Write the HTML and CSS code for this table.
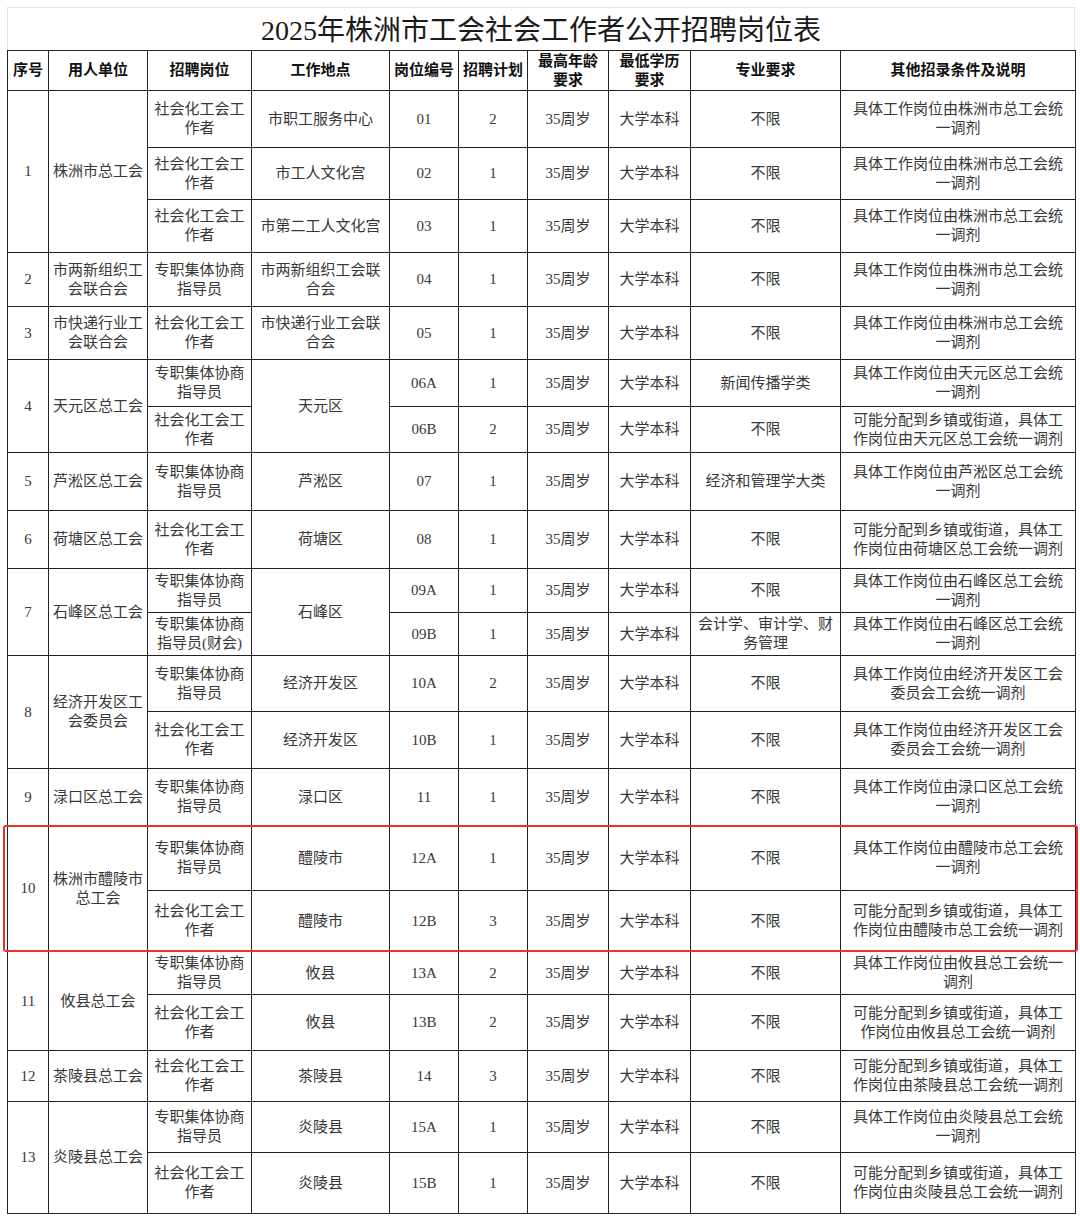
FILE: index.html
```html
<!DOCTYPE html>
<html lang="zh-CN">
<head>
<meta charset="utf-8">
<title>2025年株洲市工会社会工作者公开招聘岗位表</title>
<link rel="stylesheet" href="styles.css">
</head>
<body>
<div class="page">
  <div class="title">2025年株洲市工会社会工作者公开招聘岗位表</div>
  <table class="jobs">
    <colgroup>
      <col class="c-no"><col class="c-unit"><col class="c-post"><col class="c-place"><col class="c-code"><col class="c-plan"><col class="c-age"><col class="c-edu"><col class="c-major"><col class="c-note">
    </colgroup>
    <thead>
      <tr class="h40">
        <th>序号</th><th>用人单位</th><th>招聘岗位</th><th>工作地点</th><th class="tight">岗位编号</th><th class="tight">招聘计划</th><th>最高年龄要求</th><th>最低学历要求</th><th>专业要求</th><th>其他招录条件及说明</th>
      </tr>
    </thead>
    <tbody>
      <tr class="h57">
        <td rowspan="3">1</td><td rowspan="3" class="unit">株洲市总工会</td><td>社会化工会工作者</td><td>市职工服务中心</td><td>01</td><td>2</td><td>35周岁</td><td>大学本科</td><td>不限</td><td class="note">具体工作岗位由株洲市总工会统一调剂</td>
      </tr>
      <tr class="h52">
        <td>社会化工会工作者</td><td>市工人文化宫</td><td>02</td><td>1</td><td>35周岁</td><td>大学本科</td><td>不限</td><td class="note">具体工作岗位由株洲市总工会统一调剂</td>
      </tr>
      <tr class="h53">
        <td>社会化工会工作者</td><td>市第二工人文化宫</td><td>03</td><td>1</td><td>35周岁</td><td>大学本科</td><td>不限</td><td class="note">具体工作岗位由株洲市总工会统一调剂</td>
      </tr>
      <tr class="h54">
        <td>2</td><td class="unit">市两新组织工会联合会</td><td>专职集体协商指导员</td><td>市两新组织工会联合会</td><td>04</td><td>1</td><td>35周岁</td><td>大学本科</td><td>不限</td><td class="note">具体工作岗位由株洲市总工会统一调剂</td>
      </tr>
      <tr class="h53">
        <td>3</td><td class="unit">市快递行业工会联合会</td><td>社会化工会工作者</td><td>市快递行业工会联合会</td><td>05</td><td>1</td><td>35周岁</td><td>大学本科</td><td>不限</td><td class="note">具体工作岗位由株洲市总工会统一调剂</td>
      </tr>
      <tr class="h47">
        <td rowspan="2">4</td><td rowspan="2" class="unit">天元区总工会</td><td>专职集体协商指导员</td><td rowspan="2">天元区</td><td>06A</td><td>1</td><td>35周岁</td><td>大学本科</td><td>新闻传播学类</td><td class="note">具体工作岗位由天元区总工会统一调剂</td>
      </tr>
      <tr class="h46">
        <td>社会化工会工作者</td><td>06B</td><td>2</td><td>35周岁</td><td>大学本科</td><td>不限</td><td class="note">可能分配到乡镇或街道，具体工作岗位由天元区总工会统一调剂</td>
      </tr>
      <tr class="h58">
        <td>5</td><td class="unit">芦淞区总工会</td><td>专职集体协商指导员</td><td>芦淞区</td><td>07</td><td>1</td><td>35周岁</td><td>大学本科</td><td>经济和管理学大类</td><td class="note">具体工作岗位由芦淞区总工会统一调剂</td>
      </tr>
      <tr class="h58">
        <td>6</td><td class="unit">荷塘区总工会</td><td>社会化工会工作者</td><td>荷塘区</td><td>08</td><td>1</td><td>35周岁</td><td>大学本科</td><td>不限</td><td class="note">可能分配到乡镇或街道，具体工作岗位由荷塘区总工会统一调剂</td>
      </tr>
      <tr class="h44">
        <td rowspan="2">7</td><td rowspan="2" class="unit">石峰区总工会</td><td>专职集体协商指导员</td><td rowspan="2">石峰区</td><td>09A</td><td>1</td><td>35周岁</td><td>大学本科</td><td>不限</td><td class="note">具体工作岗位由石峰区总工会统一调剂</td>
      </tr>
      <tr class="h43">
        <td>专职集体协商指导员(财会)</td><td>09B</td><td>1</td><td>35周岁</td><td>大学本科</td><td>会计学、审计学、财务管理</td><td class="note">具体工作岗位由石峰区总工会统一调剂</td>
      </tr>
      <tr class="h56">
        <td rowspan="2">8</td><td rowspan="2" class="unit">经济开发区工会委员会</td><td>专职集体协商指导员</td><td>经济开发区</td><td>10A</td><td>2</td><td>35周岁</td><td>大学本科</td><td>不限</td><td class="note">具体工作岗位由经济开发区工会委员会工会统一调剂</td>
      </tr>
      <tr class="h57">
        <td>社会化工会工作者</td><td>经济开发区</td><td>10B</td><td>1</td><td>35周岁</td><td>大学本科</td><td>不限</td><td class="note">具体工作岗位由经济开发区工会委员会工会统一调剂</td>
      </tr>
      <tr class="h57">
        <td>9</td><td class="unit">渌口区总工会</td><td>专职集体协商指导员</td><td>渌口区</td><td>11</td><td>1</td><td>35周岁</td><td>大学本科</td><td>不限</td><td class="note">具体工作岗位由渌口区总工会统一调剂</td>
      </tr>
      <tr class="h65">
        <td rowspan="2">10</td><td rowspan="2" class="unit">株洲市醴陵市总工会</td><td>专职集体协商指导员</td><td>醴陵市</td><td>12A</td><td>1</td><td>35周岁</td><td>大学本科</td><td>不限</td><td class="note">具体工作岗位由醴陵市总工会统一调剂</td>
      </tr>
      <tr class="h61">
        <td>社会化工会工作者</td><td>醴陵市</td><td>12B</td><td>3</td><td>35周岁</td><td>大学本科</td><td>不限</td><td class="note">可能分配到乡镇或街道，具体工作岗位由醴陵市总工会统一调剂</td>
      </tr>
      <tr class="h43">
        <td rowspan="2">11</td><td rowspan="2" class="unit">攸县总工会</td><td>专职集体协商指导员</td><td>攸县</td><td>13A</td><td>2</td><td>35周岁</td><td>大学本科</td><td>不限</td><td class="note">具体工作岗位由攸县总工会统一调剂</td>
      </tr>
      <tr class="h56">
        <td>社会化工会工作者</td><td>攸县</td><td>13B</td><td>2</td><td>35周岁</td><td>大学本科</td><td>不限</td><td class="note">可能分配到乡镇或街道，具体工作岗位由攸县总工会统一调剂</td>
      </tr>
      <tr class="h51">
        <td>12</td><td class="unit">茶陵县总工会</td><td>社会化工会工作者</td><td>茶陵县</td><td>14</td><td>3</td><td>35周岁</td><td>大学本科</td><td>不限</td><td class="note">可能分配到乡镇或街道，具体工作岗位由茶陵县总工会统一调剂</td>
      </tr>
      <tr class="h51">
        <td rowspan="2">13</td><td rowspan="2" class="unit">炎陵县总工会</td><td>专职集体协商指导员</td><td>炎陵县</td><td>15A</td><td>1</td><td>35周岁</td><td>大学本科</td><td>不限</td><td class="note">具体工作岗位由炎陵县总工会统一调剂</td>
      </tr>
      <tr class="h61">
        <td>社会化工会工作者</td><td>炎陵县</td><td>15B</td><td>1</td><td>35周岁</td><td>大学本科</td><td>不限</td><td class="note">可能分配到乡镇或街道，具体工作岗位由炎陵县总工会统一调剂</td>
      </tr>
    </tbody>
  </table>
  <div class="highlight"></div>
</div>
</body>
</html>
```

FILE: styles.css
```css
html, body {
  margin: 0;
  padding: 0;
  background: #ffffff;
}

body {
  font-family: "Liberation Serif", "Noto Sans CJK SC", serif;
  color: #333333;
}

.page {
  position: relative;
  padding: 7px 0 0 7px;
}

.title {
  width: 1068px;
  height: 43px;
  box-sizing: border-box;
  border: 1px solid #e2e2e2;
  border-bottom: none;
  text-align: center;
  font-size: 28px;
  line-height: 46px;
  color: #1a1a1a;
}

.jobs {
  border-collapse: collapse;
  table-layout: fixed;
  width: 1068px;
  font-size: 15px;
  line-height: 19px;
}

.c-no { width: 41px; }
.c-unit { width: 99px; }
.c-post { width: 104px; }
.c-place { width: 138px; }
.c-code { width: 69px; }
.c-plan { width: 69px; }
.c-age { width: 81px; }
.c-edu { width: 82px; }
.c-major { width: 150px; }
.c-note { width: 235px; }

.jobs th,
.jobs td {
  border: 1px solid #222222;
  text-align: center;
  vertical-align: middle;
  padding: 0 4px;
  overflow: hidden;
}

.jobs td {
  color: #383838;
}

.jobs th {
  font-weight: 700;
  color: #111111;
}

.jobs th.tight {
  padding: 0;
}

.jobs td.unit {
  padding: 0 3px;
}

.jobs td.note {
  padding: 0 8px;
}

.h40 { height: 40px; }
.h43 { height: 43px; }
.h44 { height: 44px; }
.h46 { height: 46px; }
.h47 { height: 47px; }
.h51 { height: 51px; }
.h52 { height: 52px; }
.h53 { height: 53px; }
.h54 { height: 54px; }
.h56 { height: 56px; }
.h57 { height: 57px; }
.h58 { height: 58px; }
.h61 { height: 61px; }
.h65 { height: 65px; }

.highlight {
  position: absolute;
  left: 3px;
  top: 825px;
  width: 1075px;
  height: 127px;
  box-sizing: border-box;
  border: 2px solid #ee2f2a;
  border-radius: 3px;
  pointer-events: none;
}
```
